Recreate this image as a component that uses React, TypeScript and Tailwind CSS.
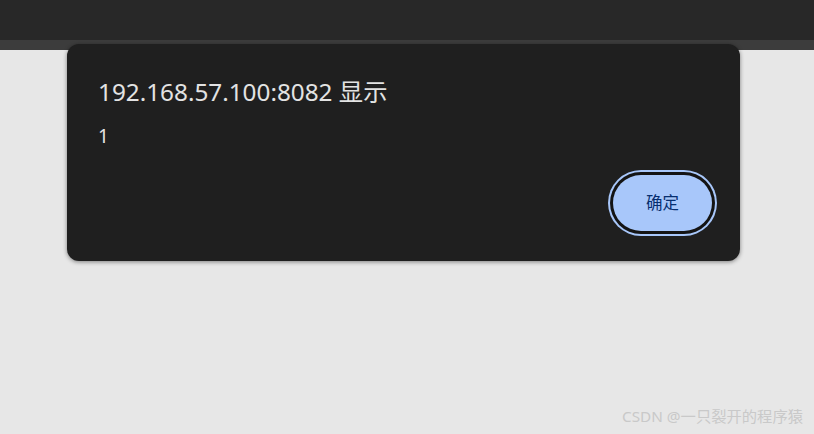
import React from 'react';

export default function App() {
  return (
    <div
      className="relative w-[814px] h-[434px] overflow-hidden bg-[#e7e7e7]"
      style={{ fontFamily: '"Segoe UI", "Noto Sans", "Noto Sans CJK SC", sans-serif' }}
    >
      {/* browser chrome */}
      <div className="h-[40px] bg-[#282828]" />
      <div className="h-[10px] bg-[#3c3c3c]" />

      {/* alert dialog */}
      <div className="absolute left-[67px] top-[44px] w-[673px] h-[217px] rounded-[12px] bg-[#1f1f1f] shadow-[0_1px_4px_rgba(0,0,0,0.45)] flex flex-col px-[31px] pt-[32px]">
        <h1 className="text-[24.3px] leading-[32px] text-[#e3e3e3]">192.168.57.100:8082 显示</h1>
        <p className="mt-[16px] text-[19px] leading-[24px] text-[#e3e3e3]">1</p>
        <div className="flex justify-end mt-[27px]">
          <button className="mr-[-3px] w-[99px] h-[56px] rounded-full bg-[#a8c7fa] text-[#062e6f] text-[16.5px] shadow-[0_0_0_3px_#141414,0_0_0_5px_#a8c7fa]">
            确定
          </button>
        </div>
      </div>

      {/* watermark */}
      <div className="absolute right-[11px] bottom-[6px] text-[15.3px] text-[#c9c9c9]">
        CSDN @一只裂开的程序猿
      </div>
    </div>
  );
}
